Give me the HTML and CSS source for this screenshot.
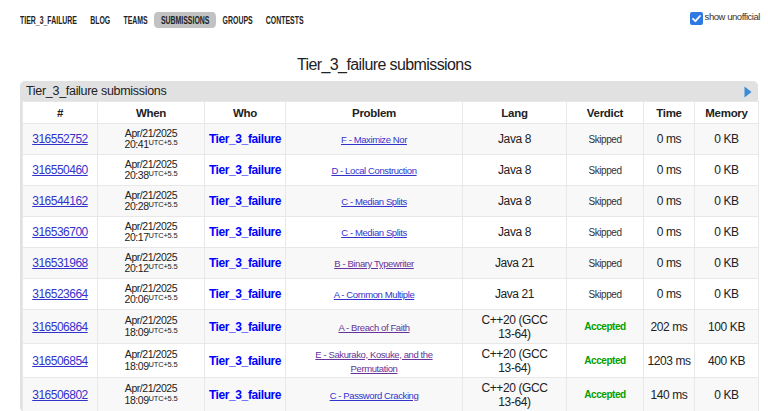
FILE: index.html
```html
<!DOCTYPE html>
<html>
<head>
<meta charset="utf-8">
<link rel="stylesheet" href="styles.css">
</head>
<body>
<div class="topbar">
  <nav class="menu">
    <a class="menu-item">TIER_3_FAILURE</a>
    <a class="menu-item">BLOG</a>
    <a class="menu-item">TEAMS</a>
    <a class="menu-item active">SUBMISSIONS</a>
    <a class="menu-item">GROUPS</a>
    <a class="menu-item">CONTESTS</a>
  </nav>
  <label class="unofficial">
    <span class="checkbox"><svg width="13" height="13" viewBox="0 0 13 13"><path d="M3 6.8 L5.4 9.2 L10 4" fill="none" stroke="#fff" stroke-width="1.8" stroke-linecap="round" stroke-linejoin="round"/></svg></span>
    <span class="unofficial-text">show unofficial</span>
  </label>
</div>
<h1 class="page-title">Tier_3_failure submissions</h1>
<div class="panel">
  <div class="panel-head">
    <span class="panel-title">Tier_3_failure submissions</span>
    <svg class="arrow" width="8" height="12" viewBox="0 0 8 12"><path d="M0.5 0.5 L7.5 6 L0.5 11.5 Z" fill="#3d8ad8"/></svg>
  </div>
  <table class="status">
    <colgroup>
      <col class="c-id"><col class="c-when"><col class="c-who"><col class="c-prob"><col class="c-lang"><col class="c-verdict"><col class="c-time"><col class="c-mem">
    </colgroup>
    <thead>
      <tr class="head-row"><th>#</th><th>When</th><th>Who</th><th>Problem</th><th>Lang</th><th>Verdict</th><th>Time</th><th>Memory</th></tr>
    </thead>
    <tbody>
      <tr class="row odd"><td><a class="sid">316552752</a></td><td class="when">Apr/21/2025<br>20:41<sup>UTC+5.5</sup></td><td><a class="who">Tier_3_failure</a></td><td class="prob"><a class="plink">F - Maximize Nor</a></td><td class="lang">Java 8</td><td class="verdict">Skipped</td><td class="num">0 ms</td><td class="num">0 KB</td></tr>
      <tr class="row"><td><a class="sid">316550460</a></td><td class="when">Apr/21/2025<br>20:38<sup>UTC+5.5</sup></td><td><a class="who">Tier_3_failure</a></td><td class="prob"><a class="plink">D - Local Construction</a></td><td class="lang">Java 8</td><td class="verdict">Skipped</td><td class="num">0 ms</td><td class="num">0 KB</td></tr>
      <tr class="row odd"><td><a class="sid">316544162</a></td><td class="when">Apr/21/2025<br>20:28<sup>UTC+5.5</sup></td><td><a class="who">Tier_3_failure</a></td><td class="prob"><a class="plink">C - Median Splits</a></td><td class="lang">Java 8</td><td class="verdict">Skipped</td><td class="num">0 ms</td><td class="num">0 KB</td></tr>
      <tr class="row"><td><a class="sid">316536700</a></td><td class="when">Apr/21/2025<br>20:17<sup>UTC+5.5</sup></td><td><a class="who">Tier_3_failure</a></td><td class="prob"><a class="plink">C - Median Splits</a></td><td class="lang">Java 8</td><td class="verdict">Skipped</td><td class="num">0 ms</td><td class="num">0 KB</td></tr>
      <tr class="row odd"><td><a class="sid">316531968</a></td><td class="when">Apr/21/2025<br>20:12<sup>UTC+5.5</sup></td><td><a class="who">Tier_3_failure</a></td><td class="prob"><a class="plink visited">B - Binary Typewriter</a></td><td class="lang">Java 21</td><td class="verdict">Skipped</td><td class="num">0 ms</td><td class="num">0 KB</td></tr>
      <tr class="row"><td><a class="sid">316523664</a></td><td class="when">Apr/21/2025<br>20:06<sup>UTC+5.5</sup></td><td><a class="who">Tier_3_failure</a></td><td class="prob"><a class="plink">A - Common Multiple</a></td><td class="lang">Java 21</td><td class="verdict">Skipped</td><td class="num">0 ms</td><td class="num">0 KB</td></tr>
      <tr class="row tall odd"><td><a class="sid">316506864</a></td><td class="when">Apr/21/2025<br>18:09<sup>UTC+5.5</sup></td><td><a class="who">Tier_3_failure</a></td><td class="prob"><a class="plink visited">A - Breach of Faith</a></td><td class="lang">C++20 (GCC 13-64)</td><td class="verdict ok">Accepted</td><td class="num">202 ms</td><td class="num">100 KB</td></tr>
      <tr class="row tall"><td><a class="sid">316506854</a></td><td class="when">Apr/21/2025<br>18:09<sup>UTC+5.5</sup></td><td><a class="who">Tier_3_failure</a></td><td class="prob"><a class="plink visited">E - Sakurako, Kosuke, and the Permutation</a></td><td class="lang">C++20 (GCC 13-64)</td><td class="verdict ok">Accepted</td><td class="num">1203 ms</td><td class="num">400 KB</td></tr>
      <tr class="row tall odd"><td><a class="sid">316506802</a></td><td class="when">Apr/21/2025<br>18:09<sup>UTC+5.5</sup></td><td><a class="who">Tier_3_failure</a></td><td class="prob"><a class="plink">C - Password Cracking</a></td><td class="lang">C++20 (GCC 13-64)</td><td class="verdict ok">Accepted</td><td class="num">140 ms</td><td class="num">0 KB</td></tr>
    </tbody>
  </table>
</div>
</body>
</html>
```
FILE: styles.css
```css
* { box-sizing: border-box; }
body {
  margin: 0;
  background: #fff;
  color: #222;
  font-family: "Liberation Sans", Arial, sans-serif;
  font-size: 12px;
  overflow: hidden;
}
.topbar {
  display: flex;
  justify-content: space-between;
  align-items: flex-start;
  padding: 12px 8px 0 20px;
  height: 30px;
}
.menu {
  display: flex;
  align-items: flex-start;
  transform: scaleX(0.66);
  transform-origin: left top;
}
.menu-item {
  font-weight: bold;
  font-size: 10.5px;
  line-height: 16px;
  color: #222;
  padding: 0 10px;
  border-radius: 5px;
}
.menu-item:first-child { padding-left: 0; }
.menu-item.active { background: #c2c2c2; }
.unofficial {
  display: flex;
  align-items: flex-start;
  gap: 2px;
}
.checkbox {
  width: 13px;
  height: 13px;
  border-radius: 2px;
  background: #2f79e3;
  display: flex;
}
.unofficial-text {
  font-size: 9.5px;
  letter-spacing: -0.45px;
  line-height: 10px;
  margin-top: 0;
  color: #333;
}
.page-title {
  margin: 24px 0 0;
  text-align: center;
  font-weight: normal;
  font-size: 16px;
  letter-spacing: -0.6px;
  line-height: 22px;
  color: #222;
}
.panel {
  margin: 5px 10px 0 20px;
  background: #e1e1e1;
  border-radius: 5px;
  padding: 0 2px;
}
.panel-head {
  height: 20px;
  display: flex;
  align-items: center;
  justify-content: space-between;
  padding: 0 4px;
}
.panel-title {
  font-size: 12.5px;
  letter-spacing: -0.3px;
  color: #222;
}
.arrow { margin-top: 1px; }
.status {
  width: 736px;
  table-layout: fixed;
  border-collapse: collapse;
  background: #fff;
}
.c-id { width: 75px; }
.c-when { width: 107px; }
.c-who { width: 81px; }
.c-prob { width: 177px; }
.c-lang { width: 104px; }
.c-verdict { width: 77px; }
.c-time { width: 51px; }
.c-mem { width: 64px; }
.status th, .status td {
  border: 1px solid #e8e8e8;
  text-align: center;
  vertical-align: middle;
  padding: 0 2px;
  letter-spacing: -0.4px;
}
.head-row { height: 22px; }
.status th {
  font-size: 11.5px;
  letter-spacing: -0.3px;
  font-weight: bold;
  color: #222;
}
.row { height: 31px; }
.row.tall { height: 34px; }
.row.odd { background: #f8f8f8; }
.sid {
  color: #3333cc;
  text-decoration: underline;
  font-size: 12px;
  letter-spacing: -0.5px;
}
.status td.when {
  font-size: 10.5px;
  letter-spacing: -0.45px;
  line-height: 11.5px;
  color: #222;
}
.when sup {
  font-size: 7.5px;
  letter-spacing: -0.2px;
  vertical-align: 3px;
  line-height: 0;
}
.who {
  color: #0000ff;
  font-weight: bold;
  font-size: 12px;
  letter-spacing: -0.4px;
}
.status td.prob { padding: 0 14px; }
.plink {
  color: #3333cc;
  text-decoration: underline;
  font-size: 9.5px;
  letter-spacing: -0.4px;
  line-height: 12px;
}
.plink.visited { color: #663399; }
.status td.lang {
  font-size: 12px;
  line-height: 14px;
  padding: 0 12px;
}
.status td.verdict {
  font-size: 10px;
  letter-spacing: -0.45px;
  color: #333;
}
.status td.verdict.ok {
  color: #00a000;
  font-weight: bold;
}
.num { font-size: 12px; }
```
